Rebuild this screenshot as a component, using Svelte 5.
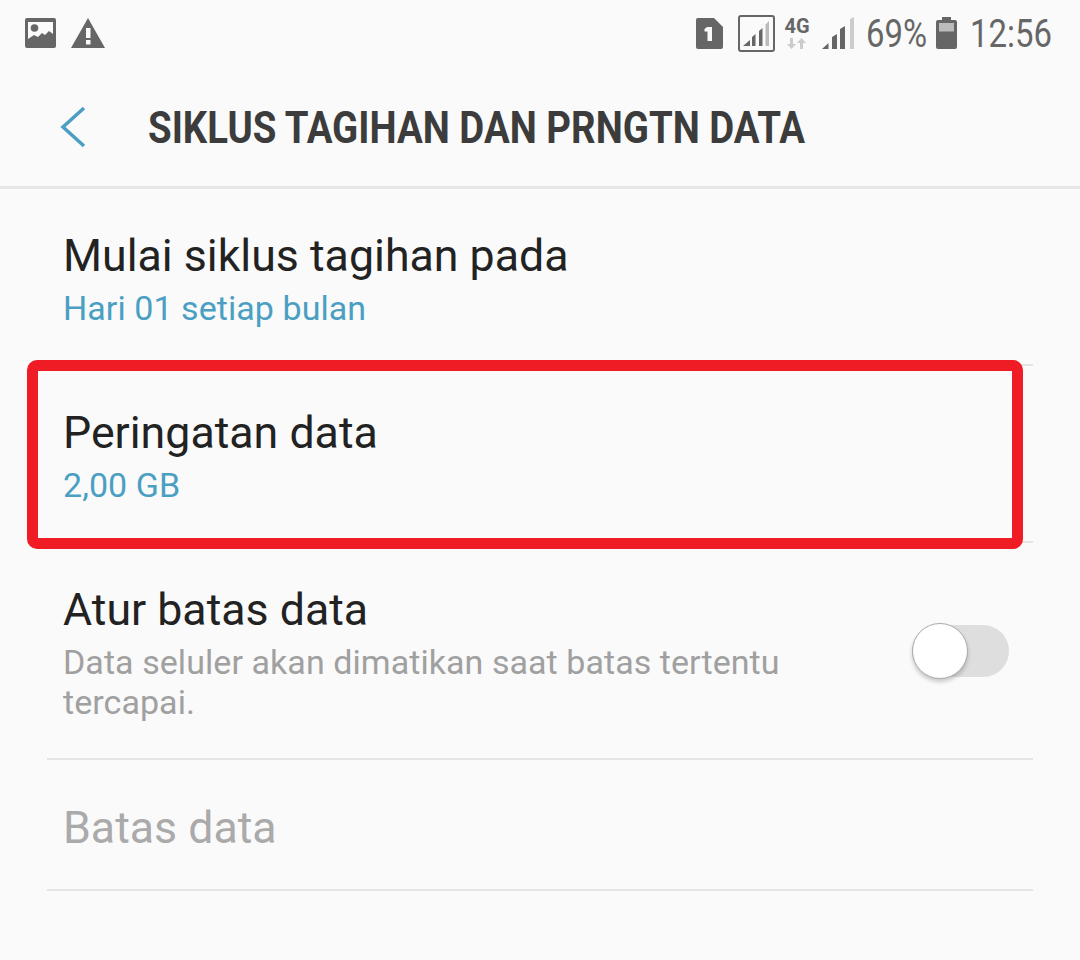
<script>
  const rows = [
    { title: 'Mulai siklus tagihan pada', sub: 'Hari 01 setiap bulan', kind: 'value', h: 177, pad: 42 },
    { title: 'Peringatan data', sub: '2,00 GB', kind: 'value', h: 177, pad: 42 },
    {
      title: 'Atur batas data',
      sub: 'Data seluler akan dimatikan saat batas tertentu tercapai.',
      kind: 'toggle',
      h: 217,
      pad: 42
    },
    { title: 'Batas data', kind: 'disabled', h: 131, pad: 43 }
  ];
</script>

<div class="screen">
  <div class="status">
    <div class="status__left">
      <svg width="32" height="30" viewBox="0 0 32 30">
        <path fill="#666" fill-rule="evenodd" d="M2 0h27a2 2 0 0 1 2 2v26a2 2 0 0 1-2 2H2a2 2 0 0 1-2-2V2a2 2 0 0 1 2-2zM3 4v17l6-4 4 2 4-4 3 2 4-4 4 3V4z" />
        <circle cx="9.500" cy="10" r="3.800" fill="#666" />
      </svg>
      <svg width="34" height="30" viewBox="0 0 34 30">
        <path fill="#666" fill-rule="evenodd" d="M17 0l17 30H0zM15 10v10h4.500V10zM15 22v4.500h4.500V22z" />
      </svg>
    </div>
    <div class="status__right">
      <svg class="ic-sim" width="28" height="31" viewBox="0 0 28 31">
        <path fill="#666" d="M2 0h16l9 9v20a2 2 0 0 1-2 2H2a2 2 0 0 1-2-2V2a2 2 0 0 1 2-2z" />
        <path fill="#fafafa" d="M11 9h5v14h-4.500v-9.500h-3V11z" />
      </svg>
      <svg class="ic-box" width="37" height="37" viewBox="0 0 37 37">
        <rect x="1" y="1" width="35" height="35" rx="2" fill="none" stroke="#666" stroke-width="2" />
        <path fill="#666" d="M5 31l7-6v6zM14 31v-9l3.500-3v12zM21 31V16l3.500-3v18z" />
        <path fill="#bbb" d="M27.500 31V9.500L31 6v25z" />
      </svg>
      <div class="net">
        <span class="net__label">4G</span>
        <svg width="20" height="11" viewBox="0 0 20 11">
          <path fill="#ccc" d="M3 0h3v6h3l-4.500 5L0 6h3zM16 11h-3V5h-3l4.500-5L19 5h-3z" />
        </svg>
      </div>
      <svg class="ic-signal" width="32" height="32" viewBox="0 0 32 32">
        <path fill="#666" d="M0 32l6.500-6v6zM10 32V20l5-3v15zM18 32V12l5-3v23z" />
        <path fill="#ccc" d="M28 32V2l4-2v32z" />
      </svg>
      <span class="pct">69%</span>
      <svg class="ic-batt" width="21" height="32" viewBox="0 0 21 32">
        <path fill="#666" d="M6 0h9v3h4a2 2 0 0 1 2 2v25a2 2 0 0 1-2 2H2a2 2 0 0 1-2-2V5a2 2 0 0 1 2-2h4z" />
        <rect x="3" y="6" width="15" height="8.500" fill="#bbb" />
      </svg>
      <span class="time">12:56</span>
    </div>
  </div>

  <header class="bar">
    <svg class="back" width="26" height="42" viewBox="0 0 26 42">
      <path d="M24 2L3 21l21 19" fill="none" stroke="#4a9fc2" stroke-width="3.500" />
    </svg>
    <h1>SIKLUS TAGIHAN DAN PRNGTN DATA</h1>
  </header>

  <ul class="list">
    {#each rows as row}
      <li
        class="row"
        class:row--disabled={row.kind === 'disabled'}
        style="height: {row.h}px; padding-top: {row.pad}px"
      >
        <div class="row__text">
          <div class="row__title">{row.title}</div>
          {#if row.sub}
            <div class="row__sub" class:row__sub--value={row.kind === 'value'}>{row.sub}</div>
          {/if}
        </div>
        {#if row.kind === 'toggle'}
          <span class="switch"><span class="switch__knob"></span></span>
        {/if}
      </li>
    {/each}
  </ul>

  <div class="mark"></div>
</div>

<style>
  :global(body) {
    background: #fafafa;
  }
  .screen {
    position: relative;
    width: 1080px;
    height: 960px;
    overflow: hidden;
    background: #fafafa;
    font-family: Roboto, 'Liberation Sans', sans-serif;
  }
  .status {
    display: flex;
    justify-content: space-between;
    align-items: center;
    height: 66px;
    padding: 0 28px 0 25px;
    box-sizing: border-box;
    color: #666;
  }
  .status__left,
  .status__right {
    display: flex;
    align-items: center;
  }
  .status__left {
    gap: 14px;
  }
  .ic-sim {
    margin-right: 14px;
  }
  .ic-box {
    margin-right: 10px;
  }
  .net {
    display: flex;
    flex-direction: column;
    align-items: center;
    gap: 4px;
    width: 24px;
    margin-right: 13px;
  }
  .net__label {
    font-size: 20px;
    font-weight: 700;
    line-height: 16px;
  }
  .net svg {
    display: block;
  }
  .ic-signal {
    margin-right: 12px;
  }
  .pct,
  .time {
    padding-top: 2px;
    font-size: 38px;
    display: inline-block;
    transform: scaleX(0.865);
    transform-origin: left;
    white-space: nowrap;
  }
  .pct {
    width: 61px;
  }
  .time {
    width: 82px;
  }
  .ic-batt {
    margin: 0 13px 0 9px;
  }
  .bar {
    display: flex;
    align-items: center;
    height: 123px;
    box-sizing: border-box;
    border-bottom: 3px solid #e6e6e6;
    padding: 2px 0 0 60px;
  }
  .back {
    flex: none;
    margin-right: 62px;
  }
  h1 {
    margin: 0;
    font-size: 45px;
    font-weight: 700;
    color: #3c3c3c;
    white-space: nowrap;
    transform: scaleX(0.853);
    transform-origin: left;
  }
  .list {
    list-style: none;
    margin: 0;
    padding: 0 47px;
  }
  .row {
    display: flex;
    align-items: flex-start;
    justify-content: space-between;
    box-sizing: border-box;
    padding: 0 24px 0 16px;
    border-bottom: 2px solid #e4e4e4;
  }
  .row__text {
    width: 760px;
  }
  .row__title {
    font-size: 44.700px;
    line-height: 50px;
    color: #222;
  }
  .row__sub {
    margin-top: 7px;
    font-size: 34px;
    letter-spacing: 0.06px;
    line-height: 40px;
    color: #a0a0a0;
  }
  .row__sub--value {
    color: #4a9fc2;
  }
  .row--disabled .row__title {
    color: #aaa;
  }
  .switch {
    position: relative;
    flex: none;
    width: 97px;
    height: 52px;
    margin-top: 40px;
    border-radius: 26px;
    background: #dedede;
  }
  .switch__knob {
    position: absolute;
    left: 0;
    top: -2px;
    width: 56px;
    height: 56px;
    box-sizing: border-box;
    border: 1px solid #aaa;
    border-radius: 50%;
    background: #fff;
    box-shadow: 0 3px 4px rgba(0, 0, 0, 0.2);
  }
  /* annotation drawn over the screenshot */
  .mark {
    position: absolute;
    left: 27px;
    top: 360px;
    width: 996px;
    height: 189px;
    box-sizing: border-box;
    border: 11px solid #ef1c25;
    border-radius: 10px;
  }
</style>
